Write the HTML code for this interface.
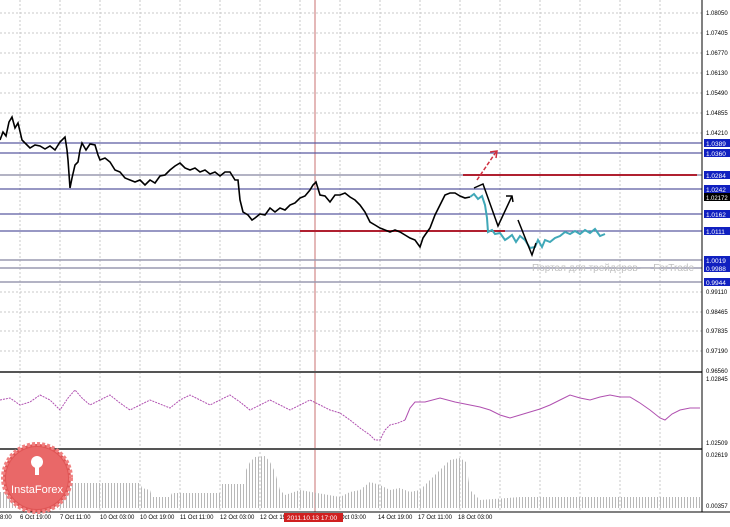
<!DOCTYPE html><html><head><style>body{margin:0;background:#fff;width:730px;height:522px;overflow:hidden;font-family:"Liberation Sans",sans-serif}</style></head><body>
<svg width="730" height="522" xmlns="http://www.w3.org/2000/svg" font-family="Liberation Sans" font-size="6.5">
<defs><pattern id="vb" width="3" height="10" patternUnits="userSpaceOnUse"><rect x="0" y="0" width="1" height="10" fill="#b8b8b8"/></pattern></defs>
<rect width="730" height="522" fill="#fff"/>
<g stroke="#c8c8c8" stroke-dasharray="2,2" stroke-width="1">
<line x1="20" y1="0" x2="20" y2="512"/><line x1="60" y1="0" x2="60" y2="512"/><line x1="100" y1="0" x2="100" y2="512"/><line x1="140" y1="0" x2="140" y2="512"/><line x1="180" y1="0" x2="180" y2="512"/><line x1="220" y1="0" x2="220" y2="512"/><line x1="260" y1="0" x2="260" y2="512"/><line x1="300" y1="0" x2="300" y2="512"/><line x1="340" y1="0" x2="340" y2="512"/><line x1="380" y1="0" x2="380" y2="512"/><line x1="420" y1="0" x2="420" y2="512"/><line x1="460" y1="0" x2="460" y2="512"/><line x1="500" y1="0" x2="500" y2="512"/><line x1="540" y1="0" x2="540" y2="512"/><line x1="580" y1="0" x2="580" y2="512"/><line x1="620" y1="0" x2="620" y2="512"/><line x1="660" y1="0" x2="660" y2="512"/>
<line x1="0" y1="13" x2="702" y2="13"/><line x1="0" y1="33" x2="702" y2="33"/><line x1="0" y1="53" x2="702" y2="53"/><line x1="0" y1="73" x2="702" y2="73"/><line x1="0" y1="93" x2="702" y2="93"/><line x1="0" y1="113" x2="702" y2="113"/><line x1="0" y1="133" x2="702" y2="133"/><line x1="0" y1="292" x2="702" y2="292"/><line x1="0" y1="312" x2="702" y2="312"/><line x1="0" y1="331" x2="702" y2="331"/><line x1="0" y1="351" x2="702" y2="351"/>
</g>
<line x1="315" y1="0" x2="315" y2="512" stroke="#c87070"/>
<g stroke="#5a5aa0" stroke-width="1.2">
<line x1="0" y1="143" x2="702" y2="143"/><line x1="0" y1="153" x2="702" y2="153"/><line x1="0" y1="189" x2="702" y2="189"/><line x1="0" y1="214" x2="702" y2="214"/><line x1="0" y1="231" x2="702" y2="231"/>
</g>
<g stroke="#9a9ab0" stroke-width="1.5">
<line x1="0" y1="175" x2="702" y2="175"/><line x1="0" y1="260" x2="702" y2="260"/><line x1="0" y1="268" x2="702" y2="268"/><line x1="0" y1="282" x2="702" y2="282"/>
</g>
<line x1="463" y1="175" x2="697" y2="175" stroke="#b02030" stroke-width="2"/>
<line x1="300" y1="231" x2="505" y2="231" stroke="#b02030" stroke-width="2"/>
<polyline fill="none" stroke="#000" stroke-width="1.6" points="0,140 3,132 6,136 9,122 12,117 15,128 18,123 22,140 25,143 30,148 35,145 40,146 45,149 50,146 55,150 60,142 65,137 67,150 68,160 70,188 72,178 75,165 78,162 80,150 82,143 86,150 90,144 95,145 98,155 100,160 105,158 110,162 115,170 120,172 125,178 130,180 135,182 140,180 145,185 150,180 155,183 160,176 165,175 170,170 175,166 180,163 185,168 190,170 195,168 200,172 205,170 210,174 215,172 220,176 225,172 230,172 235,180 238,180 240,200 243,212 248,215 252,220 255,218 260,214 265,215 270,208 275,212 280,208 285,210 290,205 295,203 300,198 305,196 310,190 313,185 316,182 320,195 325,196 330,202 335,195 340,195 345,193 350,197 355,200 360,205 365,212 370,222 375,225 380,228 385,230 390,232 395,230 400,232 405,235 410,238 415,240 420,247 423,238 425,235 430,228 435,215 440,205 445,195 450,193 455,193 460,196 465,198 470,197"/>
<polyline fill="none" stroke="#40a8b8" stroke-width="2" points="470,197 474,194 478,199 482,196 485,205 487,218 488,232 492,230 495,234 500,233 505,240 508,238 512,235 516,242 520,236 525,240 530,248 535,247 538,240 542,247 545,240 550,242 555,238 560,236 565,232 570,234 575,231 580,234 585,230 590,233 595,229 600,236 605,234"/>
<polyline fill="none" stroke="#000" stroke-width="1.5" points="474,188 483,184 498,226 512,196"/>
<polyline fill="none" stroke="#000" stroke-width="1.5" points="506,196 512,196 513,202"/>
<polyline fill="none" stroke="#000" stroke-width="1.5" points="518,220 532,255 536,243"/>
<line x1="477" y1="180" x2="496" y2="152" stroke="#d03040" stroke-width="1.5" stroke-dasharray="4,2"/>
<polyline fill="none" stroke="#d03040" stroke-width="1.5" points="490,152 497,151 496,158"/>
<text x="532" y="271" fill="#c0c0c0" font-size="10">Портал для трейдеров — ForTrade</text>
<line x1="0" y1="372" x2="702" y2="372" stroke="#555" stroke-width="2"/>
<line x1="0" y1="449" x2="702" y2="449" stroke="#555" stroke-width="2"/>
<polyline fill="none" stroke="#b050b0" stroke-width="1" stroke-dasharray="2,1" points="0,400 10,398 20,405 30,402 40,395 50,400 60,410 68,398 75,390 82,398 90,405 100,400 110,395 120,403 130,410 140,405 150,400 160,404 170,408 180,400 190,395 200,400 210,405 220,400 230,395 240,402 250,410 260,405 270,400 280,405 290,410 300,405 310,400 320,405 330,410 340,413 350,420 360,428 370,435 375,440 380,440 385,430 390,425 398,423 405,420"/>
<polyline fill="none" stroke="#b050b0" stroke-width="1" points="405,420 410,408 415,402 425,402 440,398 455,402 470,405 480,407 490,410 500,415 510,418 520,415 530,412 540,409 550,405 560,400 570,395 580,398 590,400 600,397 610,395 620,397 630,397 640,403 650,410 660,418 665,420 672,414 680,410 690,408 700,408"/>
<polygon fill="url(#vb)" points="0,508 0,492 60,492 62,483 140,483 142,488 150,490 152,497 170,497 172,493 220,493 222,484 245,484 246,470 250,462 255,457 265,456 270,462 275,472 280,490 285,495 300,490 340,497 350,492 360,490 370,482 380,485 390,490 400,488 410,492 420,490 430,480 440,470 450,460 460,458 466,462 470,490 480,500 520,497 560,497 700,497 700,508"/>
<line x1="702" y1="0" x2="702" y2="512" stroke="#000"/>
<line x1="0" y1="512" x2="730" y2="512" stroke="#000"/>
<g fill="#000" font-size="6">
<text x="706" y="15">1.08050</text><text x="706" y="35">1.07405</text><text x="706" y="55">1.06770</text><text x="706" y="75">1.06130</text><text x="706" y="95">1.05490</text><text x="706" y="115">1.04855</text><text x="706" y="135">1.04210</text><text x="706" y="294">0.99110</text><text x="706" y="314">0.98465</text><text x="706" y="333">0.97835</text><text x="706" y="353">0.97190</text><text x="706" y="373">0.96560</text><text x="706" y="381">1.02845</text><text x="706" y="445">1.02509</text><text x="706" y="457">0.02619</text><text x="706" y="508">0.00357</text>
</g>
<g font-size="6.5" fill="#fff">
<rect x="704" y="139" width="26" height="8" fill="#1020c0"/><text x="706" y="146">1.0389</text>
<rect x="704" y="149" width="26" height="8" fill="#1020c0"/><text x="706" y="156">1.0360</text>
<rect x="704" y="171" width="26" height="8" fill="#1020c0"/><text x="706" y="178">1.0284</text>
<rect x="704" y="185" width="26" height="8" fill="#1020c0"/><text x="706" y="192">1.0242</text>
<rect x="704" y="193" width="26" height="8" fill="#000"/><text x="706" y="200" font-size="6">1.02172</text>
<rect x="704" y="210" width="26" height="8" fill="#1020c0"/><text x="706" y="217">1.0162</text>
<rect x="704" y="227" width="26" height="8" fill="#1020c0"/><text x="706" y="234">1.0111</text>
<rect x="704" y="256" width="26" height="8" fill="#1020c0"/><text x="706" y="263">1.0019</text>
<rect x="704" y="264" width="26" height="8" fill="#1020c0"/><text x="706" y="271">0.9988</text>
<rect x="704" y="278" width="26" height="8" fill="#1020c0"/><text x="706" y="285">0.9944</text>
</g>
<g font-size="6" fill="#000">
<text x="0" y="519">8:00</text><text x="20" y="519">6 Oct 19:00</text><text x="60" y="519">7 Oct 11:00</text><text x="100" y="519">10 Oct 03:00</text><text x="140" y="519">10 Oct 19:00</text><text x="180" y="519">11 Oct 11:00</text><text x="220" y="519">12 Oct 03:00</text><text x="260" y="519">12 Oct 19</text><text x="340" y="519">Oct 03:00</text><text x="378" y="519">14 Oct 19:00</text><text x="418" y="519">17 Oct 11:00</text><text x="458" y="519">18 Oct 03:00</text>
</g>
<rect x="284" y="513" width="59" height="9" fill="#d02020"/><text x="287" y="520" fill="#fff" font-size="6.5">2011.10.13 17:00</text>
<g>
<circle cx="37" cy="478" r="34" fill="#e05555" stroke="#f08080" stroke-width="4" stroke-dasharray="3,2"/>
<circle cx="37" cy="478" r="31" fill="#e96868"/>
<circle cx="37" cy="462" r="6" fill="#fff"/><rect x="35" y="465" width="4" height="10" fill="#fff"/>
<text x="37" y="493" fill="#fff" font-size="11" text-anchor="middle">InstaForex</text>
</g>
</svg>
</body></html>
